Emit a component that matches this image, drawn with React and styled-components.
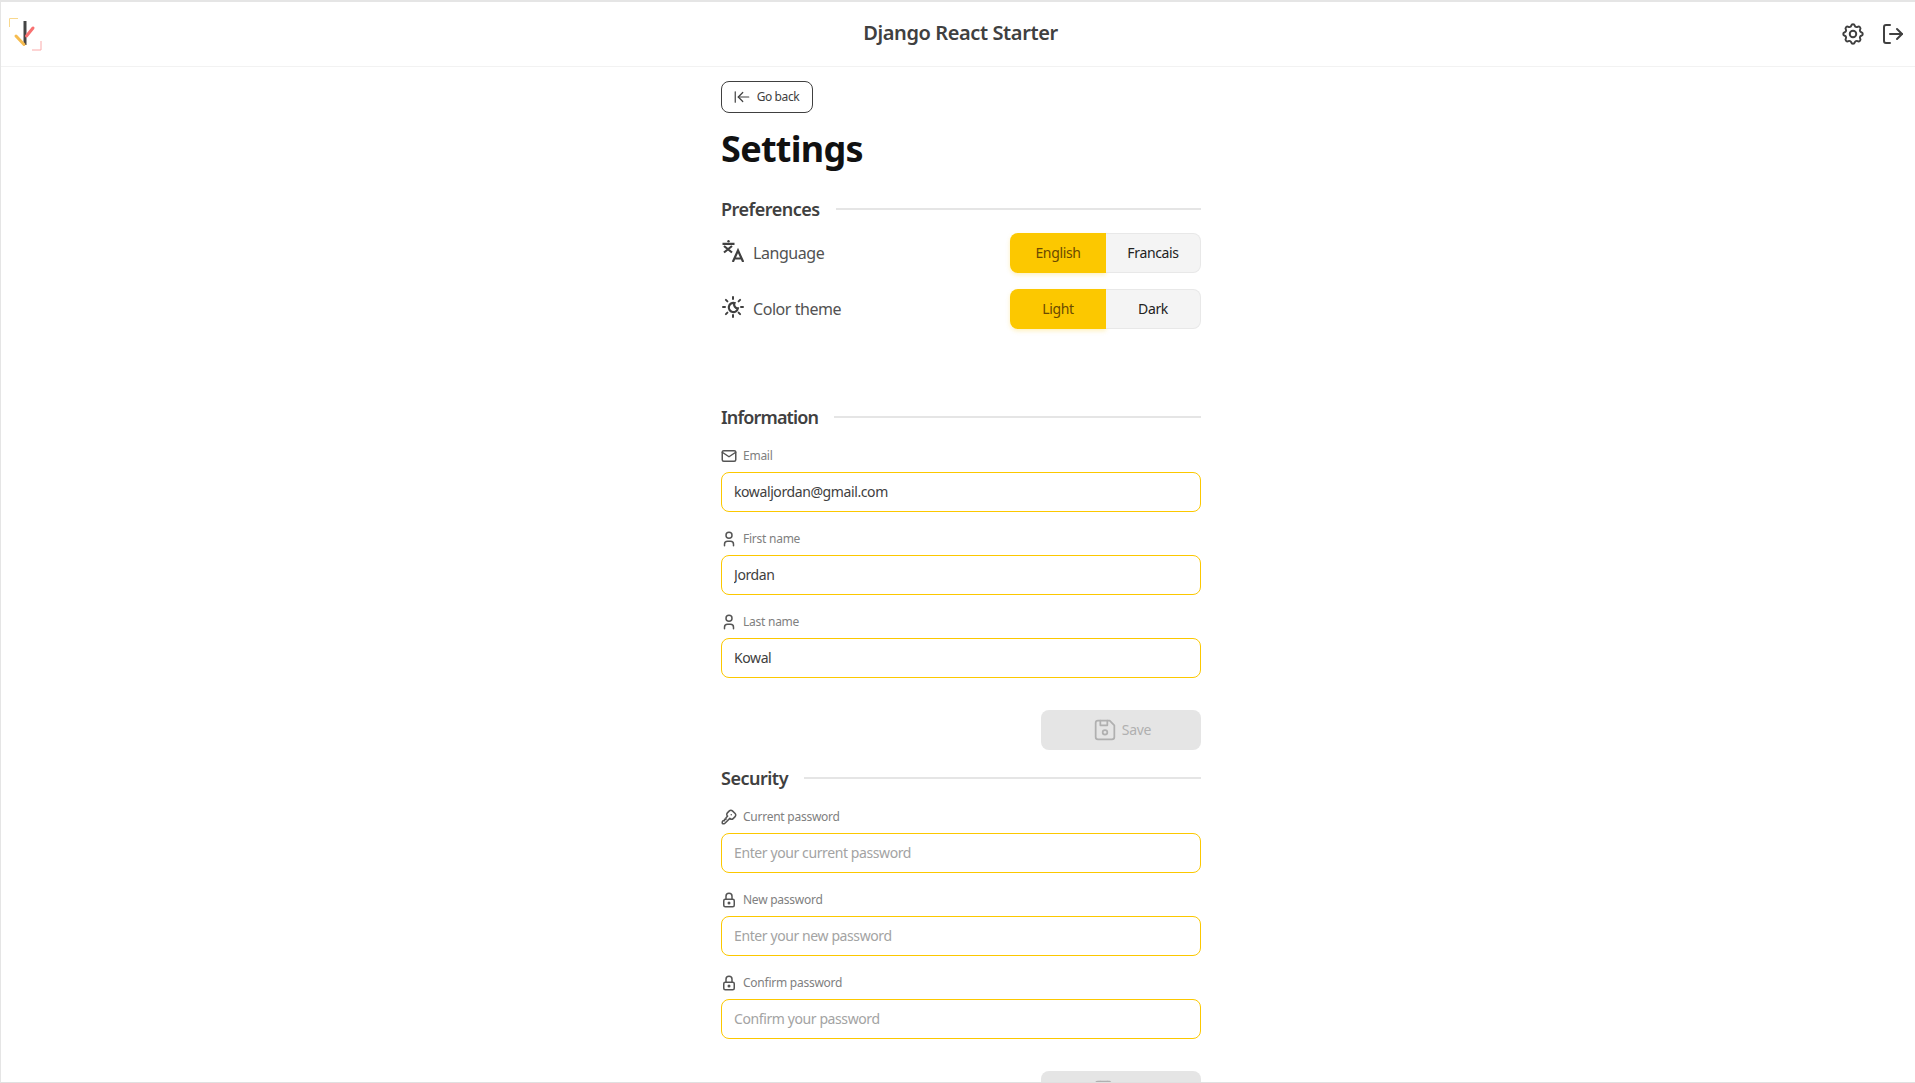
import React from "react";
import styled, { createGlobalStyle } from "styled-components";
import { TbSettings, TbMail, TbUser, TbKey, TbLock, TbDeviceFloppy } from "react-icons/tb";
import { LuLogOut, LuArrowLeftToLine } from "react-icons/lu";

const FONT = `"Noto Sans", "Open Sans", sans-serif`;
const Global = createGlobalStyle`
  html, body { margin: 0; padding: 0; height: 100%; background: #fff; overflow: hidden; }
  body { font-family: ${FONT}; color: #3f3f46; }
  * { box-sizing: border-box; }
`;
const Frame = styled.div`
  height: 1083px; width: 1915px; overflow: hidden; position: relative;
  border-top: 2px solid #e5e5e5; border-left: 1px solid #e5e5e5; border-bottom: 1px solid #e0e0e0;
  display: flex; flex-direction: column;
`;
const Header = styled.header`
  height: 65px; flex: none; display: flex; align-items: center; justify-content: space-between;
  padding: 0 10px 0 8px; border-bottom: 1px solid #f2f2f2; position: relative;
`;
const Title = styled.div`
  position: absolute; left: 0; right: 0; text-align: center; font-size: 20px; font-weight: 600; color: #404040;
  padding-left: 5px; margin-top: -3px; letter-spacing: -0.4px;
`;
const HeaderIcons = styled.div` display: flex; gap: 15px; align-items: center; color: #404040; `;
const Main = styled.main` flex: 1; display: flex; justify-content: center; padding-left: 6px; `;
const Column = styled.div` width: 480px; display: flex; flex-direction: column; padding-top: 14px; `;
const BackButton = styled.button`
  width: 92px; height: 32px; border: 1px solid #404040; border-radius: 8px; background: #fff;
  display: flex; align-items: center; justify-content: center; gap: 6px; font: 400 12px ${FONT}; color: #404040; padding: 0 2px 1px 0; letter-spacing: -0.4px;
`;
const Heading = styled.h1` margin: 11px 0 0; font-size: 36px; line-height: 50px; font-weight: 700; color: #111; letter-spacing: -0.7px; `;
const SectionHead = styled.div`
  display: flex; align-items: center; gap: 16px; font-size: 18px; font-weight: 600; color: #404040; line-height: 26px; margin-top: ${p => p.$top}px; letter-spacing: ${p => p.$tight ? -0.85 : -0.5}px;
  &::after { content: ""; flex: 1; height: 2px; background: #e5e5e5; }
`;
const PrefRow = styled.div` display: flex; align-items: center; justify-content: space-between; height: 40px; margin-top: ${p => p.$top}px; `;
const PrefLabel = styled.div` display: flex; align-items: center; gap: 9px; font-size: 16px; color: #525252; letter-spacing: -0.45px; padding-bottom: 1px; svg { margin: 0 0 3px 1px; } `;
const Toggle = styled.div` display: flex; width: 191px; height: 40px; `;
const ToggleItem = styled.div`
  flex: 1; display: flex; align-items: center; justify-content: center; font-size: 14px; font-weight: 400; letter-spacing: -0.35px; padding-bottom: 1px;
  ${p => p.$active ? `flex: none; width: 96px; background:#fcc800;color:#6b4a00;border-radius:8px 0 0 8px;box-shadow:0 2px 4px rgba(252,200,0,.25);` : `background:#f4f4f4;color:#222;border:1px solid #e8e8e8;border-left:0;border-radius:0 8px 8px 0;`}
`;
const Field = styled.div` margin-top: ${p => p.$top}px; display: flex; flex-direction: column; `;
const FieldLabel = styled.label` display: flex; align-items: center; gap: 5px; height: 19px; font-size: 12px; color: #808080; letter-spacing: -0.25px; svg { color: #555; flex: none; margin-left: -1px; } `;
const Input = styled.input`
  margin-top: 7px; height: 40px; width: 100%; border: 1px solid #fcc800; border-radius: 8px; padding: 0 12px 1px;
  font: 400 14px ${FONT}; color: #404040; background: #fff; outline: none; letter-spacing: -0.4px;
  &::placeholder { color: #a3a3a3; opacity: 1; }
`;
const SaveRow = styled.div` display: flex; justify-content: flex-end; margin-top: ${p => p.$top}px; `;
const SaveButton = styled.button`
  width: 160px; height: 40px; border: 0; border-radius: 8px; background: #e5e5e5; color: #b0b0b0;
  display: flex; align-items: center; justify-content: center; gap: 3px; font: 400 14px ${FONT}; padding: 0 0 1px; flex: none; letter-spacing: -0.3px;
`;
const Logo = () => (
  <svg width="33" height="33" viewBox="0 0 33 33" fill="none">
    <path d="M.5 9V.5H9" stroke="#f8d88e" strokeWidth="1" />
    <path d="M23 32h9v-9" stroke="#fbaaaa" strokeWidth="1" />
    <path d="M16 3v24" stroke="#444" strokeWidth="3" />
    <path d="M17.5 18L24 10" stroke="#f87171" strokeWidth="3" strokeLinecap="round" />
    <path d="M7 18l8 8.5" stroke="#f6bc50" strokeWidth="3" strokeLinecap="round" />
  </svg>
);
const LanguageIcon = () => (
  <svg width="22" height="22" viewBox="0 0 22 22" fill="none" stroke="#404040" strokeWidth="2.2">
    <circle cx="6.5" cy="1.2" r="1.2" fill="#404040" stroke="none" />
    <path d="M.5 3.8h12M2 6l8 6.5M10 6l-8 6.5" />
    <path d="M10.8 22L16 10.5 21.2 22M12.5 18.5h7" />
  </svg>
);
const ThemeIcon = () => (
  <svg width="22" height="22" viewBox="0 0 22 22" fill="none" stroke="#404040" strokeWidth="2" strokeLinecap="round">
    <path d="M11 1v2M11 19v2M1 11h2M19 11h2M3.9 3.9l1.5 1.5M16.6 16.6l1.5 1.5M18.1 3.9l-1.5 1.5M5.4 16.6l-1.5 1.5" />
    <path d="M12.5 7a4.6 4.6 0 1 0 3.4 5.4 3.8 3.8 0 0 1-3.4-5.4z" strokeWidth="2.2" />
  </svg>
);
const SaveBlock = ({ top }) => (
  <SaveRow $top={top}><SaveButton><TbDeviceFloppy size={28} strokeWidth={1.5} />Save</SaveButton></SaveRow>
);
const F = ({ icon: Icon, label, value, placeholder, top }) => (
  <Field $top={top}>
    <FieldLabel><Icon size={18} />{label}</FieldLabel>
    <Input defaultValue={value} placeholder={placeholder} />
  </Field>
);
export default function App() {
  return (
    <Frame>
      <Global />
      <Header>
        <Logo />
        <Title>Django React Starter</Title>
        <HeaderIcons><TbSettings size={26} strokeWidth={1.8} /><LuLogOut size={24} /></HeaderIcons>
      </Header>
      <Main>
        <Column>
          <BackButton><LuArrowLeftToLine size={18} strokeWidth={1.6} />Go back</BackButton>
          <Heading>Settings</Heading>
          <SectionHead $top={22}>Preferences</SectionHead>
          <PrefRow $top={11}>
            <PrefLabel><LanguageIcon />Language</PrefLabel>
            <Toggle><ToggleItem $active>English</ToggleItem><ToggleItem>Francais</ToggleItem></Toggle>
          </PrefRow>
          <PrefRow $top={16}>
            <PrefLabel><ThemeIcon />Color theme</PrefLabel>
            <Toggle><ToggleItem $active>Light</ToggleItem><ToggleItem>Dark</ToggleItem></Toggle>
          </PrefRow>
          <SectionHead $top={75} $tight>Information</SectionHead>
          <F top={16} icon={TbMail} label="Email" value="kowaljordan@gmail.com" />
          <F top={17} icon={TbUser} label="First name" value="Jordan" />
          <F top={17} icon={TbUser} label="Last name" value="Kowal" />
          <SaveBlock top={32} />
          <SectionHead $top={15}>Security</SectionHead>
          <F top={16} icon={TbKey} label="Current password" placeholder="Enter your current password" />
          <F top={17} icon={TbLock} label="New password" placeholder="Enter your new password" />
          <F top={17} icon={TbLock} label="Confirm password" placeholder="Confirm your password" />
          <SaveBlock top={32} />
        </Column>
      </Main>
    </Frame>
  );
}
